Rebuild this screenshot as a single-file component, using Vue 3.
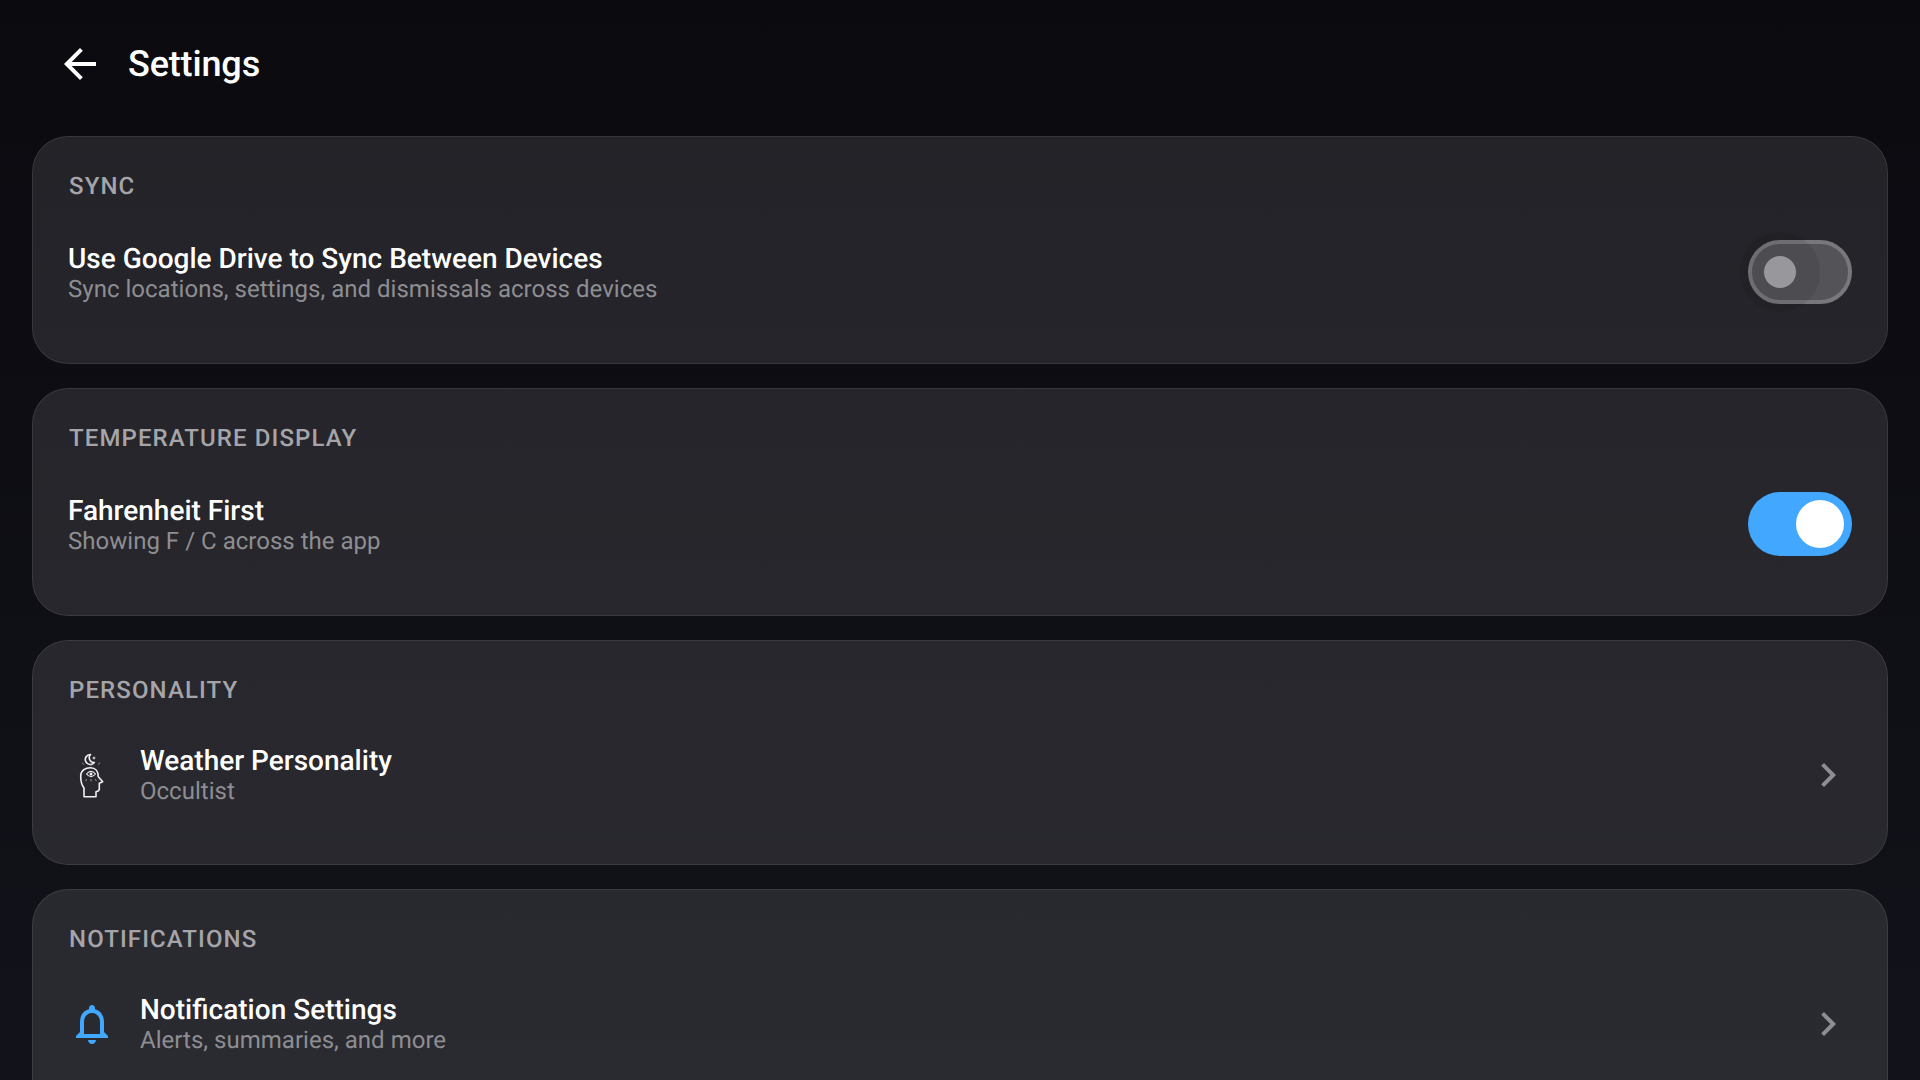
<template>
  <div class="page">
    <header class="top">
      <button class="back" aria-label="Back">
        <svg width="48" height="48" viewBox="0 0 24 24" fill="#fff">
          <path d="M20 11H7.830l5.590-5.590L12 4l-8 8 8 8 1.410-1.410L7.830 13H20v-2z" />
        </svg>
      </button>
      <h1 class="title">Settings</h1>
    </header>

    <section class="card">
      <h2 class="section">SYNC</h2>
      <div class="row row-toggle">
        <div class="text">
          <div class="name">Use Google Drive to Sync Between Devices</div>
          <div class="sub">Sync locations, settings, and dismissals across devices</div>
        </div>
        <div class="switch off" @click="sync = !sync" :class="{ on: sync }"><span class="thumb"></span></div>
      </div>
    </section>

    <section class="card">
      <h2 class="section">TEMPERATURE DISPLAY</h2>
      <div class="row row-toggle">
        <div class="text">
          <div class="name">Fahrenheit First</div>
          <div class="sub">Showing F / C across the app</div>
        </div>
        <div class="switch off" @click="fahrenheit = !fahrenheit" :class="{ on: fahrenheit }"><span class="thumb"></span></div>
      </div>
    </section>

    <section class="card">
      <h2 class="section">PERSONALITY</h2>
      <div class="row row-link">
        <div class="icon">
          <svg width="48" height="48" viewBox="0 0 48 48" fill="none" stroke="#f2f2f2" stroke-width="1.600" stroke-linejoin="round" stroke-linecap="round">
            <path d="M22.500 3.500a5 5 0 1 0 3.800 8 4.800 4.800 0 0 1-3.800-8Z" />
            <path d="M26 5l.6 1.400 1.400.6-1.400.6-.6 1.400-.6-1.400-1.400-.6 1.400-.6Z" fill="#f2f2f2" stroke="none" />
            <path d="M16 45.700V37C13.500 34 12.700 29 12.700 25 12.700 20 17 16.700 22.500 16.700 27.500 16.700 30.300 20.500 30.300 25.700L34.700 30.700 31.300 32.200V38Q31.300 40 28 40.700V45.700Z" />
            <path d="M18.500 23c1.600-1.900 3-2.600 4.500-2.600s2.900.7 4.500 2.600c-1.600 1.900-3 2.600-4.500 2.600s-2.900-.7-4.500-2.600Z" stroke-width="1.100" />
            <circle cx="23" cy="23" r="1.500" fill="#f2f2f2" stroke="none" />
            <path d="M14.500 12l1 1.300M31.500 12l-1 1.300M23 13.500v1.300M18.500 28.500l-.7 1.200M27.500 28.500l.7 1.200M23 28.500v1.500" stroke-width="1" stroke="#9a9a9a" />
          </svg>
        </div>
        <div class="text">
          <div class="name">Weather Personality</div>
          <div class="sub">Occultist</div>
        </div>
        <svg class="chevron" width="48" height="48" viewBox="0 0 24 24" fill="#8e8e92">
          <path d="M8.590 16.590 13.170 12 8.590 7.410 10 6l6 6-6 6z" />
        </svg>
      </div>
    </section>

    <section class="card">
      <h2 class="section">NOTIFICATIONS</h2>
      <div class="row row-link">
        <div class="icon">
          <svg width="48" height="48" viewBox="0 0 24 24" fill="#42a8ff">
            <path d="M12 22c1.100 0 2-.9 2-2h-4c0 1.100.9 2 2 2zm6-6v-5c0-3.070-1.630-5.640-4.500-6.320V4c0-.83-.67-1.500-1.500-1.500s-1.500.67-1.500 1.500v.68C7.640 5.360 6 7.920 6 11v5l-2 2v1h16v-1l-2-2zm-2 1H8v-6c0-2.480 1.510-4.500 4-4.500s4 2.020 4 4.500v6z" />
          </svg>
        </div>
        <div class="text">
          <div class="name">Notification Settings</div>
          <div class="sub">Alerts, summaries, and more</div>
        </div>
        <svg class="chevron" width="48" height="48" viewBox="0 0 24 24" fill="#8e8e92">
          <path d="M8.590 16.590 13.170 12 8.590 7.410 10 6l6 6-6 6z" />
        </svg>
      </div>
    </section>
  </div>
</template>

<script setup>
import { ref } from 'vue';

const sync = ref(false);
const fahrenheit = ref(true);
</script>

<style scoped>
.page {
  height: 1080px;
  overflow: hidden;
  padding: 0 32px;
  box-sizing: border-box;
  background: linear-gradient(180deg, #0a0a0f 0%, #12121a 100%);
  font-family: Roboto, sans-serif;
  color: #fff;
  text-rendering: geometricPrecision;
}

.top {
  height: 136px;
  display: flex;
  align-items: center;
  padding-left: 24px;
  gap: 24px;
  padding-bottom: 8px;
  box-sizing: border-box;
}

.back {
  width: 48px;
  height: 48px;
  padding: 0;
  border: none;
  background: none;
}

.title {
  margin: 0;
  font-size: 36px;
  font-weight: 500;
  letter-spacing: -0.15px;
}

.card {
  background: rgba(255, 255, 255, 0.1);
  border: 1px solid rgba(255, 255, 255, 0.09);
  border-radius: 36px;
  box-sizing: border-box;
  padding: 34.5px 35px 51px 35px;
  margin-bottom: 24px;
}

.section {
  margin: 0 0 0 1px;
  font-size: 24px;
  line-height: 28px;
  font-weight: 500;
  letter-spacing: 1.1px;
  color: #a5a5a9;
}

.row {
  display: flex;
  align-items: center;
}

.row-toggle {
  margin-top: 32.5px;
  height: 80px;
  justify-content: space-between;
}

.row-link {
  margin-top: 33.5px;
  height: 76px;
}

.text {
  flex: 1;
  padding-top: 4px;
}

.row-link .text {
  padding-top: 2px;
}

.name {
  font-size: 28px;
  line-height: 30px;
  font-weight: 500;
}

.sub {
  font-size: 24px;
  line-height: 30px;
  letter-spacing: 0.02px;
  color: #8e8e92;
}

.icon {
  width: 48px;
  height: 48px;
  margin-right: 24px;
}

.chevron {
  margin-right: 0.5px;
}

.switch {
  position: relative;
  width: 104px;
  height: 64px;
  border-radius: 32px;
  box-sizing: border-box;
  flex: none;
}

.switch.off {
  background: #545458;
  border: 4px solid #78787c;
}

.switch.on {
  background: #42a8ff;
  border: none;
}

.thumb {
  position: absolute;
  border-radius: 50%;
}

.switch.off .thumb {
  left: 12px;
  top: 12px;
  width: 32px;
  height: 32px;
  background: #98989c;
  box-shadow: 0 0 0 24px rgba(0, 0, 0, 0.08);
}

.switch.on .thumb {
  left: 48px;
  top: 8px;
  width: 48px;
  height: 48px;
  background: #fff;
  box-shadow: none;
}
</style>

<style>
html, body {
  margin: 0;
  background: #0a0a0f;
  overflow: hidden;
}
</style>
